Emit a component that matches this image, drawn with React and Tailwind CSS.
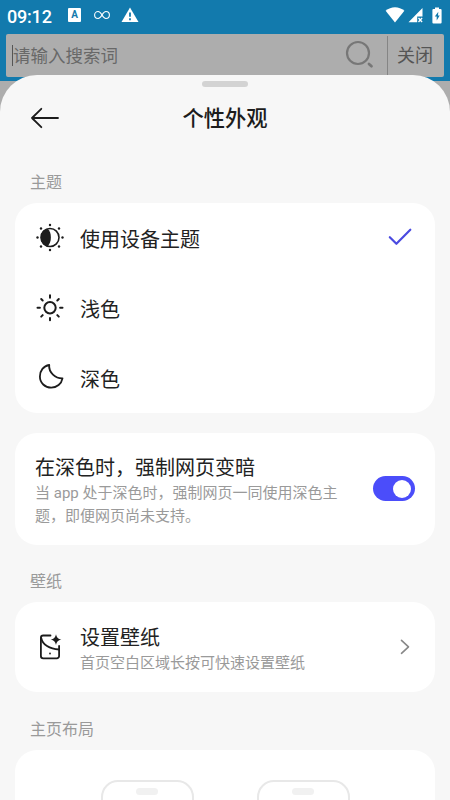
import { useState } from "react";

const AutoThemeIcon = () => (
  <svg width="30" height="30" viewBox="0 0 30 30" fill="none">
    <circle cx="15" cy="14.500" r="9" stroke="#1c1c1c" strokeWidth="1.6" />
    <path d="M12.500 5.800a9 9 0 0 0 0 17.400C17 20 17 9 12.500 5.800Z" fill="#1c1c1c" />
    <g fill="#1c1c1c">
      <circle cx="15" cy="2" r="1.200" />
      <circle cx="15" cy="27" r="1.200" />
      <circle cx="2.500" cy="14.500" r="1.200" />
      <circle cx="27.500" cy="14.500" r="1.200" />
      <circle cx="6" cy="5.500" r="1.200" />
      <circle cx="24" cy="5.500" r="1.200" />
      <circle cx="6" cy="23.500" r="1.200" />
      <circle cx="24" cy="23.500" r="1.200" />
    </g>
  </svg>
);

const SunIcon = () => (
  <svg
    width="30"
    height="30"
    viewBox="0 0 30 30"
    fill="none"
    stroke="#1c1c1c"
    strokeWidth="2"
    strokeLinecap="round"
  >
    <circle cx="15" cy="14.800" r="5.700" />
    <path d="M15 2.300v2.400M15 24.900v2.400M2.500 14.800h2.400M25.100 14.800h2.400M6.200 6l1.500 1.500M22.300 22.100l1.500 1.500M23.800 6l-1.500 1.500M7.700 22.100l-1.500 1.500" />
  </svg>
);

const MoonIcon = () => (
  <svg
    width="30"
    height="30"
    viewBox="0 0 30 30"
    fill="none"
    stroke="#1c1c1c"
    strokeWidth="1.800"
    strokeLinejoin="round"
  >
    <path d="M14.200 2C8.500 2.800 4.900 7.800 4.900 13.500c0 6.400 5.100 11.200 11.300 11.200 5.700 0 10.300-4 11.300-9.400C20.500 15.500 13.500 9.500 14.200 2Z" />
  </svg>
);

const WallpaperIcon = () => (
  <svg
    width="30"
    height="30"
    viewBox="0 0 30 30"
    fill="none"
    stroke="#1c1c1c"
    strokeWidth="1.8"
    strokeLinecap="round"
  >
    <path d="M15.500 3.500H8.200a2.300 2.300 0 0 0-2.300 2.300v18.300a2.300 2.300 0 0 0 2.300 2.300h13.600a2.300 2.300 0 0 0 2.300-2.300V14" />
    <path d="M6.200 6C7.500 12.500 14.500 17.300 24 17.500" />
    <circle cx="15" cy="21.500" r="0.900" fill="#1c1c1c" stroke="none" />
    <path
      d="M21 2.200c.9 3.400 2 4.500 5.400 5.400-3.400.9-4.500 2-5.400 5.400-.9-3.400-2-4.500-5.400-5.400 3.400-.9 4.500-2 5.400-5.400Z"
      fill="#1c1c1c"
      stroke="none"
    />
  </svg>
);

const themes = [
  { id: "device", label: "使用设备主题", Icon: AutoThemeIcon },
  { id: "light", label: "浅色", Icon: SunIcon },
  { id: "dark", label: "深色", Icon: MoonIcon },
];

const StatusBar = () => (
  <div className="flex h-[34px] items-center pr-[8px] pl-[7px] text-white">
    <span className="w-[61px] pb-[2px] text-[18px] font-medium tracking-[-0.2px]">
      09:12
    </span>
    <span className="mb-[4px] flex h-[14px] w-[13px] items-center justify-center rounded-[1px] bg-white text-[10px] leading-none font-bold text-[#127aad]">
      A
    </span>
    <svg
      className="mb-[4px] ml-[13px]"
      width="16"
      height="10"
      viewBox="0 0 16 10"
      fill="none"
      stroke="#fff"
      strokeWidth="1.1"
    >
      <path d="M8 5C6.600 2.600 5.600 1.500 4.100 1.500a3.500 3.500 0 0 0 0 7C5.600 8.500 6.600 7.400 8 5s2.400-3.500 3.900-3.500a3.500 3.500 0 0 1 0 7C10.400 8.500 9.400 7.400 8 5Z" />
    </svg>
    <svg className="mb-[4px] ml-[11px]" width="18" height="16" viewBox="0 0 18 16">
      <path d="M9 0.500 17.500 15H0.500Z" fill="#fff" />
      <path d="M9 5.500v4.200M9 11.300v1.900" stroke="#127aad" strokeWidth="1.8" />
    </svg>
    <svg className="mb-[4px] ml-auto" width="20" height="16" viewBox="0 0 20 16">
      <path d="M0.600 3.700C6-1 14-1 19.400 3.700L10 15.500Z" fill="#fff" />
    </svg>
    <svg className="mb-[4px] ml-[3px]" width="16" height="16" viewBox="0 0 16 16">
      <path d="M0.500 15.300 14.500 1v8.500H9.200v5.800Z" fill="#fff" />
      <path d="m10.500 11 3.600 4M14.100 11l-3.600 4" stroke="#fff" strokeWidth="1.3" />
    </svg>
    <svg className="mb-[4px] ml-[8px]" width="10" height="17" viewBox="0 0 10 17">
      <path
        d="M3 0.500h4v1.500h1.600q1 0 1 1v12.500q0 1-1 1H1.400q-1 0-1-1V3q0-1 1-1H3Z"
        fill="#fff"
      />
      <path d="M6.300 4.800 2.800 9.600h1.900v4l3-5H6Z" fill="#127aad" />
    </svg>
  </div>
);

const SearchBar = () => (
  <div className="ml-[6px] flex h-[43px] w-[438px] items-stretch rounded-[2px] bg-[#adadad] text-[#555]">
    <div className="my-[11px] ml-[6px] w-px bg-[#555]" />
    <span className="flex-1 text-[17.500px] leading-[44px] text-[#686868]">
      请输入搜索词
    </span>
    <svg className="mt-[5px] mr-[12px]" width="32" height="32" viewBox="0 0 32 32" fill="none">
      <circle cx="15" cy="14" r="11" stroke="#777" strokeWidth="2.200" />
      <path d="m26 25 2.500 2.200" stroke="#777" strokeWidth="2.800" strokeLinecap="round" />
    </svg>
    <div className="mt-[2px] w-px bg-[#858585]" />
    <span className="w-[56px] pr-[2px] text-center text-[18px] leading-[43px]">
      关闭
    </span>
  </div>
);

const SectionLabel = ({ children }) => (
  <h2 className="flex h-[57px] items-end pb-[9px] pl-[15px] text-[16px] leading-[22px] text-[#9a9a9a]">
    {children}
  </h2>
);

const PhonePreview = () => (
  <div className="flex h-[160px] w-[93px] justify-center rounded-[17px] border-2 border-[#e8e8e8] pt-[6px]">
    <div className="h-[7px] w-[22px] rounded-full bg-[#f1f1f1]" />
  </div>
);

const App = () => {
  const [theme, setTheme] = useState("device");
  const [forceDark, setForceDark] = useState(true);

  return (
    <div
      lang="zh-CN"
      className="relative h-[800px] w-[450px] overflow-hidden bg-[#adadad] font-[Roboto,'Noto_Sans_CJK_SC',sans-serif]"
    >
      <header className="h-[81px] bg-[#127aad]">
        <StatusBar />
        <SearchBar />
      </header>

      {/* bottom sheet */}
      <main className="absolute inset-x-0 top-[75px] bottom-0 overflow-hidden rounded-t-[37px] bg-[#f7f7f7] px-[15px] pt-[6px]">
        <div className="mx-auto h-[6px] w-[46px] rounded-full bg-[#d3d3d3]" />

        <div className="mt-[5.500px] grid h-[50px] grid-cols-[60px_1fr_60px] items-center">
          <button className="pl-[16px]">
            <svg
              width="28"
              height="22"
              viewBox="0 0 28 22"
              fill="none"
              stroke="#1c1c1c"
              strokeWidth="1.800"
              strokeLinecap="round"
              strokeLinejoin="round"
            >
              <path d="M27 11H1M10.300 1.800 1 11l9.300 9.200" />
            </svg>
          </button>
          <h1 className="pt-[2px] text-center text-[21.300px] leading-[30px] font-medium text-[#1c1c1c]">
            个性外观
          </h1>
        </div>

        <div className="pt-[3px]">
          <SectionLabel>主题</SectionLabel>
        </div>
        <section className="h-[210px] rounded-[22px] bg-white">
          {themes.map(({ id, label, Icon }) => (
            <button
              key={id}
              onClick={() => setTheme(id)}
              className="flex h-[70px] w-full items-center pr-[23px] pl-[20px] text-[20px] text-[#222]"
            >
              <Icon />
              <span className="ml-[15px] pt-[4px]">{label}</span>
              {theme === id && (
                <svg
                  className="mb-px ml-auto"
                  width="24"
                  height="18"
                  viewBox="0 0 24 18"
                  fill="none"
                  stroke="#4a4ae0"
                  strokeWidth="2.200"
                  strokeLinecap="round"
                  strokeLinejoin="round"
                >
                  <path d="m1.800 9.200 6.600 6.600L22.300 1.700" />
                </svg>
              )}
            </button>
          ))}
        </section>

        <section className="mt-[20px] flex h-[112.500px] items-center justify-between rounded-[22px] bg-white pr-[20px] pl-[20px]">
          <div className="w-[304px] pt-[4px]">
            <h3 className="text-[20px] leading-[28px] text-[#222]">
              在深色时，强制网页变暗
            </h3>
            <p className="text-[15px] leading-[23px] text-[#9a9a9a]">
              当 app 处于深色时，强制网页一同使用深色主题，即便网页尚未支持。
            </p>
          </div>
          <button
            onClick={() => setForceDark(!forceDark)}
            className={`flex h-[25px] w-[42px] items-center rounded-full px-[4px] ${
              forceDark ? "justify-end bg-[#4b4dfa]" : "justify-start bg-[#d3d3d3]"
            }`}
          >
            <span className="size-[18px] rounded-full bg-white" />
          </button>
        </section>

        <SectionLabel>壁纸</SectionLabel>
        <section className="flex h-[90px] items-center rounded-[22px] bg-white pr-[25px] pl-[20px]">
          <WallpaperIcon />
          <div className="ml-[15px] pt-[4px]">
            <h3 className="text-[20px] leading-[28px] text-[#222]">设置壁纸</h3>
            <p className="text-[15px] leading-[23px] text-[#9a9a9a]">
              首页空白区域长按可快速设置壁纸
            </p>
          </div>
          <svg
            className="ml-auto"
            width="10"
            height="16"
            viewBox="0 0 10 16"
            fill="none"
            stroke="#888"
            strokeWidth="1.600"
            strokeLinecap="round"
            strokeLinejoin="round"
          >
            <path d="m1.500 1.300 7 6.500-7 6.500" />
          </svg>
        </section>

        <div className="pt-px">
          <SectionLabel>主页布局</SectionLabel>
        </div>
        <section className="flex h-[200px] justify-center gap-[63px] rounded-t-[22px] bg-white pt-[30px]">
          <PhonePreview />
          <PhonePreview />
        </section>
      </main>
    </div>
  );
};

export default App;
